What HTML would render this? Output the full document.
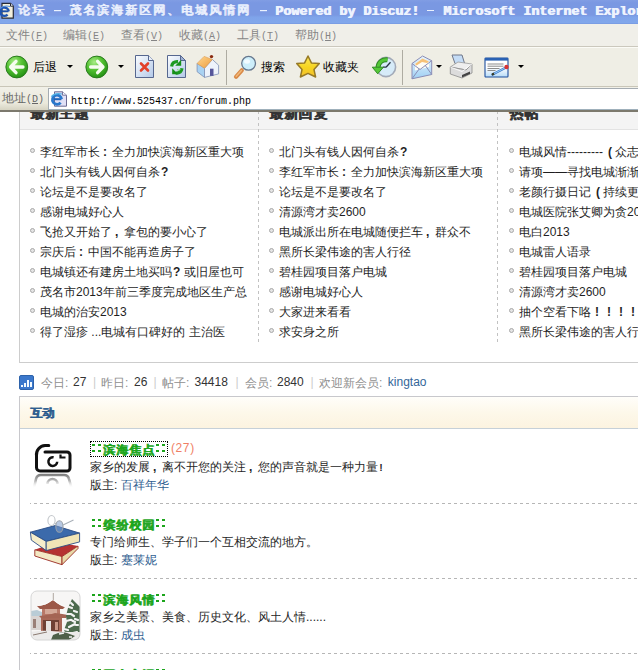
<!DOCTYPE html>
<html><head><meta charset="utf-8">
<style>
*{margin:0;padding:0;box-sizing:border-box}
html,body{width:638px;height:670px;overflow:hidden;background:#fff;font-family:"Liberation Sans",sans-serif;font-size:12px;color:#333}
.a{position:absolute}
#title{left:0;top:0;width:638px;height:24px;background:linear-gradient(#819de4,#7a98e2 12%,#7a98e2 62%,#7fa4ea 72%,#81a7eb 94%,#7698e0);}
.tt{color:#eef3fe;font-weight:bold;white-space:nowrap;text-shadow:1px 0 0 #eef3fe}
.tcjk{font-size:12px;top:2px;font-weight:normal;letter-spacing:2px;-webkit-text-stroke:.35px #eef3fe}
.tmono{font-family:"Liberation Mono",monospace;font-size:13.33px;top:4px}
#menu{left:0;top:24px;width:638px;height:23px;background:#f0efe9;border-bottom:1px solid #cbc8bd}
.mm{font-family:"Liberation Mono",monospace;font-size:10px}
.mi{color:#858585;top:27px;font-size:12px;white-space:nowrap}
#tool{left:0;top:47px;width:638px;height:40px;background:#efeee5;border-top:1px solid #fbfbf6;border-bottom:1px solid #c9c6b8}
.tl{color:#000;font-size:12px;top:59px;white-space:nowrap}
.dd{width:0;height:0;border-left:3px solid transparent;border-right:3px solid transparent;border-top:3px solid #000;top:65px}
.sep{width:1px;top:50px;height:35px;background:#aeaca2}
#addr{left:0;top:87px;width:638px;height:25px;background:linear-gradient(#f1f0e8,#ebe9dc 70%,#d6d3c2);border-bottom:2px solid #7c796d}
#urlbox{left:48px;top:88px;width:600px;height:22px;background:#fff;border:1px solid #a5acb2;border-bottom-color:#9fb0bb}
.url{font-family:"Liberation Mono",monospace;font-size:10px;color:#000;left:71px;top:96px;white-space:nowrap}
/* page */
.hd{font-weight:bold;color:#333;font-size:12px;white-space:nowrap;text-shadow:1px 0 0 currentColor}
.li{font-size:12px;color:#1f1f1f;white-space:nowrap}
.bul{width:5px;height:5px;border-radius:50%;background:#e4e4e4;border:1px solid #a9a9a9}
.vdash{width:1px;background:repeating-linear-gradient(180deg,#c2c2c2 0 3px,transparent 3px 6px)}
.hdash{height:1px;background:linear-gradient(90deg,#b6b6b6 3px,transparent 3px) 4px 0/6px 1px repeat-x}
.fp,.fq,.fm,.fx,.fo{display:inline-block;width:12px;font-weight:bold;font-family:"Liberation Sans",sans-serif}
.fp{text-align:center;padding-right:2px}.fq{padding-left:1px}.fm{padding-left:3px}.fx{padding-left:4px}.fo{padding-left:5px}
.gray{color:#999}
.pipe{color:#ccc;margin:0 5px}
.ttl{color:#1ca51c;font-weight:bold;white-space:nowrap;text-shadow:1px 0 0 currentColor;letter-spacing:1px;position:relative;top:1.5px;left:1px}
.col{display:inline-block;width:6px;height:12px;vertical-align:-1px;background:linear-gradient(#1ca51c,#1ca51c) 1px 1px/3px 2px no-repeat,linear-gradient(#1ca51c,#1ca51c) 1px 7px/3px 2px no-repeat}
.foc{}
.lnk{color:#2f6090}
.desc{color:#262626}
</style></head><body>
<!-- page content -->
<div class="a" style="left:0;top:111px;width:638px;height:559px;background:#fff"></div>
<!-- box 1 -->
<div class="a" style="left:19px;top:100px;width:700px;height:263px;border:1px solid #cdcdcd;border-top:none"></div>
<div class="a" style="left:20px;top:111px;width:620px;height:19px;background:#f4f4f4;border-bottom:1px solid #e3e3e3"></div>
<div class="a vdash" style="left:258px;top:111px;height:232px"></div>
<div class="a vdash" style="left:497px;top:111px;height:232px"></div>
<div class="a hd" style="left:30px;top:104.5px;font-size:14px;letter-spacing:.7px">最新主题</div>
<div class="a hd" style="left:269px;top:104.5px;font-size:14px;letter-spacing:.7px">最新回复</div>
<div class="a hd" style="left:509px;top:104.5px;font-size:14px;letter-spacing:.7px">热帖</div>

<div class="a" style="left:19px;top:142px;width:239px;height:200px;overflow:hidden">
<div class="a bul" style="left:11px;top:6px"></div><div class="a li" style="left:21px;top:0px;line-height:20px">李红军市长<b class="fp">:</b>全力加快滨海新区重大项</div>
<div class="a bul" style="left:11px;top:26px"></div><div class="a li" style="left:21px;top:20px;line-height:20px">北门头有钱人因何自杀<b class="fq">?</b></div>
<div class="a bul" style="left:11px;top:46px"></div><div class="a li" style="left:21px;top:40px;line-height:20px">论坛是不是要改名了</div>
<div class="a bul" style="left:11px;top:66px"></div><div class="a li" style="left:21px;top:60px;line-height:20px">感谢电城好心人</div>
<div class="a bul" style="left:11px;top:86px"></div><div class="a li" style="left:21px;top:80px;line-height:20px">飞抢又开始了<b class="fm">,</b>拿包的要小心了</div>
<div class="a bul" style="left:11px;top:106px"></div><div class="a li" style="left:21px;top:100px;line-height:20px">宗庆后<b class="fp">:</b>中国不能再造房子了</div>
<div class="a bul" style="left:11px;top:126px"></div><div class="a li" style="left:21px;top:120px;line-height:20px">电城镇还有建房土地买吗<b class="fq">?</b>或旧屋也可</div>
<div class="a bul" style="left:11px;top:146px"></div><div class="a li" style="left:21px;top:140px;line-height:20px">茂名市2013年前三季度完成地区生产总</div>
<div class="a bul" style="left:11px;top:166px"></div><div class="a li" style="left:21px;top:160px;line-height:20px">电城的治安2013</div>
<div class="a bul" style="left:11px;top:186px"></div><div class="a li" style="left:21px;top:180px;line-height:20px">得了湿疹 ...电城有口碑好的 主治医</div>
</div>
<div class="a" style="left:258px;top:142px;width:239px;height:200px;overflow:hidden">
<div class="a bul" style="left:11px;top:6px"></div><div class="a li" style="left:21px;top:0px;line-height:20px">北门头有钱人因何自杀<b class="fq">?</b></div>
<div class="a bul" style="left:11px;top:26px"></div><div class="a li" style="left:21px;top:20px;line-height:20px">李红军市长<b class="fp">:</b>全力加快滨海新区重大项</div>
<div class="a bul" style="left:11px;top:46px"></div><div class="a li" style="left:21px;top:40px;line-height:20px">论坛是不是要改名了</div>
<div class="a bul" style="left:11px;top:66px"></div><div class="a li" style="left:21px;top:60px;line-height:20px">清源湾才卖2600</div>
<div class="a bul" style="left:11px;top:86px"></div><div class="a li" style="left:21px;top:80px;line-height:20px">电城派出所在电城随便拦车<b class="fm">,</b>群众不</div>
<div class="a bul" style="left:11px;top:106px"></div><div class="a li" style="left:21px;top:100px;line-height:20px">黑所长梁伟途的害人行径</div>
<div class="a bul" style="left:11px;top:126px"></div><div class="a li" style="left:21px;top:120px;line-height:20px">碧桂园项目落户电城</div>
<div class="a bul" style="left:11px;top:146px"></div><div class="a li" style="left:21px;top:140px;line-height:20px">感谢电城好心人</div>
<div class="a bul" style="left:11px;top:166px"></div><div class="a li" style="left:21px;top:160px;line-height:20px">大家进来看看</div>
<div class="a bul" style="left:11px;top:186px"></div><div class="a li" style="left:21px;top:180px;line-height:20px">求安身之所</div>
</div>
<div class="a" style="left:498px;top:142px;width:239px;height:200px;overflow:hidden">
<div class="a bul" style="left:11px;top:6px"></div><div class="a li" style="left:21px;top:0px;line-height:20px">电城风情---------<b class="fo">(</b>众志成城</div>
<div class="a bul" style="left:11px;top:26px"></div><div class="a li" style="left:21px;top:20px;line-height:20px">请项——寻找电城渐渐</div>
<div class="a bul" style="left:11px;top:46px"></div><div class="a li" style="left:21px;top:40px;line-height:20px">老颜行摄日记<b class="fo">(</b>持续更新</div>
<div class="a bul" style="left:11px;top:66px"></div><div class="a li" style="left:21px;top:60px;line-height:20px">电城医院张艾卿为贪2013</div>
<div class="a bul" style="left:11px;top:86px"></div><div class="a li" style="left:21px;top:80px;line-height:20px">电白2013</div>
<div class="a bul" style="left:11px;top:106px"></div><div class="a li" style="left:21px;top:100px;line-height:20px">电城雷人语录</div>
<div class="a bul" style="left:11px;top:126px"></div><div class="a li" style="left:21px;top:120px;line-height:20px">碧桂园项目落户电城</div>
<div class="a bul" style="left:11px;top:146px"></div><div class="a li" style="left:21px;top:140px;line-height:20px">清源湾才卖2600</div>
<div class="a bul" style="left:11px;top:166px"></div><div class="a li" style="left:21px;top:160px;line-height:20px">抽个空看下咯<b class="fx">!</b><b class="fx">!</b><b class="fx">!</b><b class="fx">!</b></div>
<div class="a bul" style="left:11px;top:186px"></div><div class="a li" style="left:21px;top:180px;line-height:20px">黑所长梁伟途的害人行径</div>
</div>


<!-- stats -->
<svg class="a" style="left:19px;top:375px" width="15" height="15" viewBox="0 0 15 15">
  <rect x=".5" y=".5" width="14" height="14" rx="1.5" fill="#3b78cc" stroke="#2d62aa" stroke-width="1"/>
  <path d="M2 10h2v2H2zM5 8h2v4H5zM8 5h2v7H8zM11 7h2v5H11z" fill="#f4fbff"/>
</svg>
<span class="a" style="left:41px;top:375px;white-space:nowrap;color:#8f8f8f">今日:</span><span class="a" style="left:73px;top:375px;white-space:nowrap;color:#333">27</span><span class="a" style="left:93px;top:375px;white-space:nowrap;color:#ccc">|</span><span class="a" style="left:101px;top:375px;white-space:nowrap;color:#8f8f8f">昨日:</span><span class="a" style="left:134px;top:375px;white-space:nowrap;color:#333">26</span><span class="a" style="left:153.5px;top:375px;white-space:nowrap;color:#ccc">|</span><span class="a" style="left:162px;top:375px;white-space:nowrap;color:#8f8f8f">帖子:</span><span class="a" style="left:194.5px;top:375px;white-space:nowrap;color:#333">34418</span><span class="a" style="left:235.6px;top:375px;white-space:nowrap;color:#ccc">|</span><span class="a" style="left:245px;top:375px;white-space:nowrap;color:#8f8f8f">会员:</span><span class="a" style="left:277px;top:375px;white-space:nowrap;color:#333">2840</span><span class="a" style="left:310.5px;top:375px;white-space:nowrap;color:#ccc">|</span><span class="a" style="left:319px;top:375px;white-space:nowrap;color:#8f8f8f">欢迎新会员:</span><span class="a" style="left:387.8px;top:375px;white-space:nowrap;color:#336699">kingtao</span>

<!-- box 2 -->
<div class="a" style="left:19px;top:396px;width:700px;height:300px;border:1px solid #c8c8cc"></div>
<div class="a" style="left:20px;top:397px;width:620px;height:32px;background:linear-gradient(#fffefa,#fdf8ea 50%,#fcf3e0);border-bottom:1px solid #c6d0d8"></div>
<div class="a hd" style="left:30px;top:405px;color:#2c5c8e">互动</div>


<!-- item 1 camera -->
<div class="a" style="left:90px;top:441px;width:78px;height:16px;border:1px dotted #000"></div>
<svg class="a" style="left:33px;top:443px" width="40" height="46" viewBox="0 0 40 46">
  <defs><linearGradient id="rf" gradientUnits="userSpaceOnUse" x1="0" y1="31" x2="0" y2="45"><stop offset="0" stop-color="#7a7a7a"/><stop offset=".5" stop-color="#b8b8b8"/><stop offset="1" stop-color="#fff" stop-opacity="0"/></linearGradient></defs>
  <path d="M3.5 12.5A9 9 0 0 1 12 2.5h3.8" fill="none" stroke="#111" stroke-width="3" stroke-linecap="round"/>
  <path d="M3.5 12v12.5a3.5 3.5 0 0 0 3.5 3.5h27a3 3 0 0 0 3-3V12a3 3 0 0 0-3-3H12" fill="none" stroke="#111" stroke-width="3" stroke-linecap="round"/>
  <path d="M24.2 18.8A4.4 4.4 0 1 1 20.6 14.3" fill="none" stroke="#111" stroke-width="2.5"/>
  <path d="M27.5 11.5v3h5" fill="none" stroke="#111" stroke-width="2.2"/>
  <path d="M1 45L3 36Q4 32 8 32H31Q35 32 36 36L38.5 45" fill="none" stroke="url(#rf)" stroke-width="2.6"/>
  <path d="M14.5 41a5 5 0 0 1 10 0" fill="none" stroke="url(#rf)" stroke-width="2.4"/>
</svg>
<div class="a hdash" style="left:30px;top:503px;width:620px"></div>
<!-- item 2 books -->
<svg class="a" style="left:26px;top:512px" width="56" height="56" viewBox="0 0 56 56">
  <path d="M8.8 37.8L30 30 52 34 36 44.5Z" fill="#b53232"/>
  <path d="M8.8 37.8L36 44.5V52.7L8.8 44Z" fill="#f3e9c4" stroke="#9a2a22" stroke-width=".9"/>
  <path d="M36 44.5L52 34V36.5L36 52.7Z" fill="#e8d9a8" stroke="#9a2a22" stroke-width=".9"/>
  <path d="M4.4 20.2L29 13.6 53.6 21.1 20.2 29.4Z" fill="#3b6aab" stroke="#2b4d85" stroke-width=".9"/>
  <path d="M4.4 20.2L20.2 29.4V38.6L5.3 28.1Z" fill="#f6eecb" stroke="#2b4d85" stroke-width=".9"/>
  <path d="M20.2 29.4L53.6 21.1V29.9L20.2 38.6Z" fill="#f1e5b6" stroke="#2b4d85" stroke-width=".9"/>
  <ellipse cx="25.5" cy="8.5" rx="3.6" ry="5" fill="none" stroke="#c4c8cc" stroke-width="1.1"/>
  <ellipse cx="33.4" cy="14.5" rx="3.6" ry="5.8" fill="#7d9ccc" fill-opacity=".55" stroke="#9aa2aa" stroke-width="1.1"/>
  <path d="M29 11.5l1.2.6M37 13l10.5-5" stroke="#a8b0b8" stroke-width="1.1"/>
</svg>
<div class="a hdash" style="left:30px;top:578px;width:620px"></div>
<!-- item 3 pavilion -->
<svg class="a" style="left:29px;top:589px" width="53" height="53" viewBox="0 0 53 53">
  <defs><clipPath id="rc"><rect x="2" y="2" width="49" height="49" rx="6"/></clipPath></defs>
  <g clip-path="url(#rc)">
    <rect width="53" height="53" fill="#f7f6f5"/>
    <path d="M2 22l6-1 7 3v3H2z" fill="#b9ccd6"/>
    <path d="M2 27h11v14H2z" fill="#d9d4d2"/>
    <path d="M4 30h3v9H4z" fill="#9a8078"/>
    <path d="M13 18h18v9H13z" fill="#b87868"/>
    <path d="M16 20h12v5H16z" fill="#d4a898"/>
    <path d="M8 17q8 0 16-6q7 6 12 7l-2 2H11z" fill="#9c5848"/>
    <path d="M9 16.5q8 0 15-6q7 6 12 7" fill="none" stroke="#fbfbfb" stroke-width="1"/>
    <path d="M24.3 4v7" stroke="#b0a8a0" stroke-width="1"/>
    <path d="M10 27q10-1 16-3q8 1 13 2l-2 3H12z" fill="#a46454"/>
    <path d="M12 29h21v14H12z" fill="#a86858"/>
    <path d="M14 31h16v11H14z" fill="#6e4034"/>
    <path d="M17 32h5v11h-5z" fill="#e6e2e0"/>
    <path d="M26 33h3v8h-3z" fill="#c89888"/>
    <path d="M43 10l-4 9-2 8 1 6-3 8 4 9h12V18z" fill="#4d6b4e"/>
    <path d="M40 18l3 1M38 25l4 0 3 2M37 32l5-1 4 2M40 38l6-3M45 22l3 1M42 14l2 2M35 40l4 1M46 30l3 1M44 44l4-1M39 46l2 1M47 36l2 0" stroke="#f4f4f4" stroke-width="2.2" stroke-linecap="round"/>
    <path d="M2 43q10-2 20-1t31 1v10H2z" fill="#ecebea"/>
    <path d="M4 46l14-3" stroke="#8a7a70" stroke-width="1"/>
    <path d="M24 46q8-4 14-2l8 3-6 4H22z" fill="#4e6048"/>
    <path d="M30 45l5-1M40 48l3 0" stroke="#f0f0f0" stroke-width="1.4"/>
  </g>
  <rect x="2" y="2" width="49" height="49" rx="6" fill="none" stroke="#d6d6d6"/>
</svg>
<div class="a hdash" style="left:30px;top:653px;width:620px"></div>
<div class="a desc" style="left:90px;top:439px;line-height:18px;white-space:nowrap"><span class="ttl foc"><span class="col"></span><span class="col"></span>滨海焦点<span class="col"></span><span class="col"></span></span><span style="color:#f07f66;font-weight:normal;margin-left:5px;letter-spacing:.6px">(27)</span></div>
<div class="a desc" style="left:90px;top:458px;line-height:18px;white-space:nowrap">家乡的发展<b class="fm">,</b>离不开您的关注<b class="fm">,</b>您的声音就是一种力量<span style="font-family:'Liberation Mono',monospace;font-size:10px;font-weight:bold">!</span></div>
<div class="a desc" style="left:90px;top:476px;line-height:18px;white-space:nowrap">版主: <span class="lnk">百祥年华</span></div>
<div class="a desc" style="left:90px;top:514px;line-height:18px;white-space:nowrap"><span class="ttl"><span class="col"></span><span class="col"></span>缤纷校园<span class="col"></span><span class="col"></span></span></div>
<div class="a desc" style="left:90px;top:533px;line-height:18px;white-space:nowrap">专门给师生、学子们一个互相交流的地方。</div>
<div class="a desc" style="left:90px;top:551px;line-height:18px;white-space:nowrap">版主: <span class="lnk">蹇莱妮</span></div>
<div class="a desc" style="left:90px;top:589px;line-height:18px;white-space:nowrap"><span class="ttl"><span class="col"></span><span class="col"></span>滨海风情<span class="col"></span><span class="col"></span></span></div>
<div class="a desc" style="left:90px;top:608px;line-height:18px;white-space:nowrap">家乡之美景、美食、历史文化、风土人情......</div>
<div class="a desc" style="left:90px;top:626px;line-height:18px;white-space:nowrap">版主: <span class="lnk">成虫</span></div>
<div class="a desc" style="left:90px;top:664px;line-height:18px;white-space:nowrap"><span class="ttl"><span class="col"></span><span class="col"></span>国内家词<span class="col"></span><span class="col"></span></span></div>

<!-- title bar -->
<div id="title" class="a"></div>
<svg class="a" style="left:0;top:2px" width="16" height="18" viewBox="0 0 16 18">
  <path d="M2 1.3H10.5L13.3 4.2V16.2H2Z" fill="#f3efdc" stroke="#262a36" stroke-width="1.2"/>
  <path d="M10.5 1.3V4.2H13.3" fill="#fff" stroke="#262a36" stroke-width="1"/>
  <path d="M.5 9.3H8.5" stroke="#1d4fa8" stroke-width="1.9"/>
  <path d="M8.8 9.3A4.4 4.2 0 1 0 7.6 12.6" fill="none" stroke="#1f54b0" stroke-width="2.3"/>
  <path d="M0 6.5Q4 3 10 4.5" fill="none" stroke="#4f8ee0" stroke-width="1.1"/>
</svg>
<div class="a tt tcjk" style="left:18px">论坛</div>
<div class="a" style="left:54px;top:10px;width:7px;height:1px;background:#eaf2fe;box-shadow:0 .5px 0 rgba(234,242,254,.4)"></div>
<div class="a tt tcjk" style="left:69px">茂名滨海新区网、电城风情网</div>
<div class="a" style="left:260px;top:10px;width:7px;height:1px;background:#eaf2fe;box-shadow:0 .5px 0 rgba(234,242,254,.4)"></div>
<div class="a tt tmono" style="left:275px">Powered by Discuz! <span style="display:inline-block;width:7px;height:1px;background:#eaf2fe;vertical-align:4px;margin:0 .5px"></span> Microsoft Internet Explorer</div>

<!-- menu -->
<div id="menu" class="a"></div>
<div class="a mi" style="left:6px">文件<span class="mm">(<u>F</u>)</span></div>
<div class="a mi" style="left:63px">编辑<span class="mm">(<u>E</u>)</span></div>
<div class="a mi" style="left:121px">查看<span class="mm">(<u>V</u>)</span></div>
<div class="a mi" style="left:179px">收藏<span class="mm">(<u>A</u>)</span></div>
<div class="a mi" style="left:237px">工具<span class="mm">(<u>T</u>)</span></div>
<div class="a mi" style="left:295px">帮助<span class="mm">(<u>H</u>)</span></div>

<!-- toolbar -->
<div id="tool" class="a"></div>
<svg class="a" style="left:5px;top:55px" width="24" height="24" viewBox="0 0 24 24">
  <defs>
    <radialGradient id="gg" cx="38%" cy="28%" r="78%"><stop offset="0" stop-color="#a8ec86"/><stop offset=".45" stop-color="#55c233"/><stop offset="1" stop-color="#1e8c10"/></radialGradient>
    <linearGradient id="pg" x1="0" y1="0" x2="1" y2="1"><stop offset="0" stop-color="#fbfdff"/><stop offset="1" stop-color="#b3c9e8"/></linearGradient>
    <linearGradient id="rg" x1="0" y1="0" x2="1" y2="1"><stop offset="0" stop-color="#ffd890"/><stop offset="1" stop-color="#ec9a3c"/></linearGradient>
    <linearGradient id="mg" x1="0" y1="0" x2="0" y2="1"><stop offset="0" stop-color="#e8f4fc"/><stop offset="1" stop-color="#9fd0f4"/></linearGradient>
    <linearGradient id="sg" x1="0" y1="0" x2="0" y2="1"><stop offset="0" stop-color="#fbe858"/><stop offset=".55" stop-color="#f6d420"/><stop offset="1" stop-color="#f4c030"/></linearGradient>
  </defs>
  <circle cx="11.8" cy="12" r="10.9" fill="url(#gg)" stroke="#2b7a1f" stroke-width="1"/>
  <path d="M11 6.3L5.6 12l5.4 5.7M6.6 12H18" stroke="#f6fcf0" stroke-width="3.3" stroke-linecap="round" stroke-linejoin="round" fill="none"/>
</svg>
<div class="a tl" style="left:33px">后退</div>
<div class="a dd" style="left:67px"></div>
<svg class="a" style="left:85px;top:55px" width="24" height="24" viewBox="0 0 24 24">
  <circle cx="11.8" cy="12" r="10.9" fill="url(#gg)" stroke="#2b7a1f" stroke-width="1"/>
  <path d="M12.6 6.3L18 12l-5.4 5.7M17 12H5.6" stroke="#f6fcf0" stroke-width="3.3" stroke-linecap="round" stroke-linejoin="round" fill="none"/>
</svg>
<div class="a dd" style="left:118px"></div>
<!-- stop -->
<svg class="a" style="left:134px;top:54px" width="22" height="25" viewBox="0 0 22 25">
  <path d="M1.5 1.5h13l5 5v17h-18z" fill="url(#pg)" stroke="#56678f" stroke-width="1"/>
  <path d="M14.5 1.5v5h5" fill="#e8eef8" stroke="#56678f" stroke-width="1"/>
  <path d="M7 9.5l7 7M14 9.5l-7 7" stroke="#e2402a" stroke-width="2.6" stroke-linecap="round"/>
</svg>
<!-- refresh -->
<svg class="a" style="left:166px;top:54px" width="22" height="25" viewBox="0 0 22 25">
  <path d="M1.5 1.5h13l5 5v17h-18z" fill="url(#pg)" stroke="#56678f" stroke-width="1"/>
  <path d="M14.5 1.5v5h5z" fill="#9eb0d4" stroke="#56678f" stroke-width="1" stroke-linejoin="round"/>
  <path d="M5.6 12.4Q6.4 7.2 12 7.6" fill="none" stroke="#1c9a22" stroke-width="3.2"/>
  <path d="M15.2 5.8V11.8H9.2Z" fill="#159018"/>
  <path d="M16 14.2Q15.2 19.4 9.6 19" fill="none" stroke="#1c9a22" stroke-width="3.2"/>
  <path d="M6.2 14.2V20.2H12.2Z" fill="#159018"/>
  <path d="M11 15.5Q13 17 14.5 15.5" fill="none" stroke="#7ee070" stroke-width="1"/>
</svg>
<!-- home -->
<svg class="a" style="left:194px;top:52px" width="28" height="28" viewBox="0 0 28 28">
  <path d="M3.1 11.4L10.5 16.2V25.4L3.1 19.7Z" fill="#a9d2f2" stroke="#7d8fb5" stroke-width=".8"/>
  <path d="M10.5 16.2L18.4 7.5 24.6 13.2V21.9L10.5 25.4Z" fill="#eef3fb" stroke="#7d8fb5" stroke-width=".8"/>
  <path d="M16 16.7h3.5v7.2H16z" fill="#56569a"/>
  <path d="M3.1 11.4L10.1 4.4 18.4 7.5 10.5 16.2Z" fill="url(#rg)" stroke="#dc9a50" stroke-width=".6"/>
  <circle cx="17.5" cy="4.6" r="1.7" fill="#8a2a10"/>
</svg>
<div class="a sep" style="left:226px"></div>
<!-- search -->
<svg class="a" style="left:232px;top:54px" width="26" height="26" viewBox="0 0 26 26">
  <path d="M4 22.8L9.8 16.3" stroke="#d98a48" stroke-width="4.2" stroke-linecap="round"/>
  <path d="M4.2 22.2L9.4 16.6" stroke="#f0b878" stroke-width="1.4" stroke-linecap="round"/>
  <circle cx="16.6" cy="9.3" r="6.9" fill="#cdeefa" stroke="#66788e" stroke-width="1.3"/>
  <ellipse cx="15" cy="7.5" rx="3" ry="2.2" fill="#f2fbff"/>
</svg>
<div class="a tl" style="left:261px">搜索</div>
<!-- star -->
<svg class="a" style="left:295px;top:54px" width="26" height="25" viewBox="0 0 26 25">
  <path d="M13 2L16.4 8.9 24.3 9.6 19 15.6 20.6 23 13 19.4 5.4 23 7 15.6 1.7 9.6 9.6 8.9Z" fill="url(#sg)" stroke="#977a26" stroke-width="1.5" stroke-linejoin="round"/>
</svg>
<div class="a tl" style="left:323px">收藏夹</div>
<!-- history -->
<svg class="a" style="left:370px;top:54px" width="28" height="26" viewBox="0 0 28 26">
  <circle cx="16" cy="13" r="9.6" fill="#d6ebf8" stroke="#a2aab8" stroke-width="1.6"/>
  <path d="M16 13.2L20.5 8.3M16 13.2H13" stroke="#2a3444" stroke-width="1.3"/>
  <path d="M17.5 5.8C12.5 5.2 8.6 8 8 13.5" fill="none" stroke="#2f8a22" stroke-width="5"/>
  <path d="M17.5 5.8C12.5 5.2 8.6 8 8 13.5" fill="none" stroke="#55c838" stroke-width="3"/>
  <path d="M2.3 13.2L13.4 13.2 7.7 19.8Z" fill="#55c838" stroke="#2f8a22" stroke-width="1" stroke-linejoin="round"/>
</svg>
<div class="a sep" style="left:402px"></div>
<!-- mail -->
<svg class="a" style="left:410px;top:54px" width="24" height="26" viewBox="0 0 24 26">
  <path d="M2 9.5L12.6 2 21.7 6.7V20.5L2 24.8Z" fill="url(#mg)" stroke="#8a8db5" stroke-width="1"/>
  <path d="M5 10L12.5 4.5 19 7.5V13L5 16.5Z" fill="#fffdf6"/>
  <path d="M5 10L12.5 4.5 19 7.5 17 9 12 8 6.5 11.5Z" fill="#f7c278"/>
  <path d="M2 9.5L10 15.5 21.7 6.7M2 24.8L9.3 14.8M21.7 20.5L15.2 11.3" fill="none" stroke="#8a8db5" stroke-width="1"/>
</svg>
<div class="a dd" style="left:436px"></div>
<!-- print -->
<svg class="a" style="left:446px;top:50px" width="32" height="32" viewBox="0 0 32 32">
  <path d="M6 5h10l2.6 8.5H9z" fill="#c4dcf6" stroke="#6f7688" stroke-width="1"/>
  <path d="M4.3 17L12 12 26 14 20 20Z" fill="#eeeeee" stroke="#9a9a9a" stroke-width=".8"/>
  <path d="M4.3 17V24L16 28 26 23V14L20 20Z" fill="#dcdcdc" stroke="#8c8c8c" stroke-width=".8"/>
  <path d="M4.3 17L16 21.5 26 14" fill="none" stroke="#fff" stroke-width=".8"/>
  <path d="M16 25L24 21.5V24L16 27.5Z" fill="#444"/>
</svg>
<!-- edit -->
<svg class="a" style="left:484px;top:57px" width="25" height="21" viewBox="0 0 25 21">
  <defs><linearGradient id="eg" x1="0" y1="0" x2="0" y2="1"><stop offset=".5" stop-color="#fff"/><stop offset="1" stop-color="#b8dcf8"/></linearGradient></defs>
  <rect x="1" y="1" width="23" height="19" rx=".8" fill="url(#eg)" stroke="#1d4f9e" stroke-width="1.1"/>
  <rect x="1" y="1" width="23" height="2.6" fill="#2a62b4"/>
  <path d="M3.5 7h16M3.5 9.2h16M3.5 11.5h12M3.5 13.5h8" stroke="#8c8c8c" stroke-width="1"/>
  <path d="M8.5 17.5L22 10.5" stroke="#3a78c8" stroke-width="2.4" stroke-linecap="round"/>
  <path d="M9 17.2L21.5 10.7" stroke="#9fd0f8" stroke-width="1"/>
  <path d="M8 17.8l2-1.4" stroke="#3a3a20" stroke-width="2.2"/>
  <circle cx="22.5" cy="10" r="2.2" fill="#d83434"/>
</svg>
<div class="a dd" style="left:518px"></div>

<!-- address -->
<div id="addr" class="a"></div>
<div class="a mi" style="left:2px;top:90px;color:#666">地址<span class="mm">(<u>D</u>)</span></div>
<div id="urlbox" class="a"></div>
<svg class="a" style="left:48px;top:88px" width="22" height="22" viewBox="0 0 22 22">
  <path d="M6.5 3.8H14.5L18.5 7.2V18.2H6.5Z" fill="#e0e0f6" stroke="#6b6a92" stroke-width="1"/>
  <path d="M14.5 3.8V7.2H18.5" fill="#f6f6fe" stroke="#6b6a92" stroke-width=".9"/>
  <path d="M4.8 11.2H13.4" stroke="#2064b8" stroke-width="2"/>
  <path d="M13.6 11.2A4.6 4.6 0 1 0 12.6 14.6" fill="none" stroke="#2a78cc" stroke-width="2.8"/>
  <path d="M3.2 8.6Q7 4.6 14 6" fill="none" stroke="#52b4e8" stroke-width="1.2"/>
</svg>
<div class="a url">http://www.525437.cn/forum.php</div>

</body></html>
